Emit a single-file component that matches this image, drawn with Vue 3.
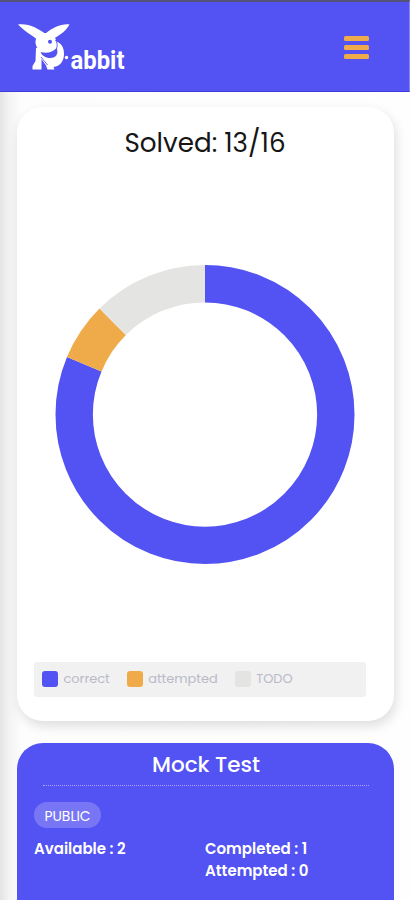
<script setup>
import { computed, ref } from 'vue'

const solved = ref(13)
const total = ref(16)

const segments = [
  { label: 'correct',   value: 13, color: '#5352f3' },
  { label: 'attempted', value: 1,  color: '#efab4a' },
  { label: 'TODO',      value: 2,  color: '#e4e4e2' },
]

const radius = 131.25
const round = 2 * Math.PI * radius

const arcs = computed(() => {
  let start = 0
  return segments.map((s) => {
    const length = (s.value / total.value) * round
    const arc = { color: s.color, dash: `${length} ${round - length}`, offset: -start }
    start += length
    return arc
  })
})
</script>

<template>
  <div class="page">

    <!-- Header -->
    <header class="header">
      <svg class="logo" viewBox="0 0 120 56" fill="#fff">
        <!-- body and legs -->
        <path d="M19 26L18.5 39L15.5 44V47.5H24.5V37L29 43.5L30.5 47.5H37.5L36.5 45C43 44.5 47 39 47 32C47 25 44 20.5 38 19L26 24Z"/>
        <!-- ears -->
        <path d="M1 2.5C11 1 21 6 30 13L21 18C16 14 7 9 1 2.5Z"/>
        <path d="M52.5 2.5C45 1.5 36 5 28 12L36 17C43 13 49 9 52.5 2.5Z"/>
        <!-- head -->
        <path d="M28 11C34 11 39 14 39 19.5C39 26 34 29.5 28.5 29.5C22 29.5 18.5 25 18.5 20C18.5 15 22 11 28 11Z"/>
        <circle cx="33" cy="19.8" r="2" fill="#5352f3"/>
        <path d="M23.5 30C30 32 36 30 39.5 26C42 31 39.5 36 33 36C28.5 36 25 33.5 23.5 30Z" fill="#5352f3"/>
        <path d="M38.5 18C40.5 20.5 40.5 24 39.5 27M24 35L30.5 43" fill="none" stroke="#5352f3" stroke-width="0.9"/>
        <circle cx="49.5" cy="35.5" r="1.7"/>
        <text x="53.5" y="47" textLength="54" lengthAdjust="spacingAndGlyphs">abbit</text>
      </svg>
      <button class="menu-btn" aria-label="Menu">
        <span></span><span></span><span></span>
      </button>
    </header>

    <!-- Progress chart -->
    <main class="content">
      <section class="card chart-card">
        <h2 class="solved">Solved: {{ solved }}/{{ total }}</h2>
        <svg class="donut" viewBox="0 0 300 300">
          <g transform="rotate(-90 150 150)">
            <circle v-for="arc in arcs" :key="arc.color" cx="150" cy="150" :r="radius"
                    fill="none" stroke-width="37.5" :stroke="arc.color"
                    :stroke-dasharray="arc.dash" :stroke-dashoffset="arc.offset"/>
          </g>
        </svg>
        <div class="legend">
          <div v-for="s in segments" :key="s.label" class="legend-item">
            <span class="swatch" :style="{ backgroundColor: s.color }"></span>
            <span class="legend-label">{{ s.label }}</span>
          </div>
        </div>
      </section>

      <!-- Mock test -->
      <section class="card test-card">
        <h3 class="test-title">Mock Test</h3>
        <span class="tag">PUBLIC</span>
        <div class="stats">
          <div class="available">Available : 2</div>
          <div>
            <div class="completed">Completed : 1</div>
            <div class="attempted">Attempted : 0</div>
          </div>
        </div>
      </section>
    </main>
  </div>
</template>

<style>
body {
  margin: 0;
  overflow: hidden;
}
</style>

<style scoped>
.page {
  box-sizing: border-box;
  width: 410px;
  height: 900px;
  overflow: hidden;
  background: linear-gradient(to right, #e4e4e4 0, #f3f3f3 9px, #fdfdfd 22px, #fefefe 100%);
  font-family: Poppins, Inter, "Open Sans", sans-serif;
}

/* ── Header ── */
.header {
  box-sizing: border-box;
  display: flex;
  align-items: center;
  justify-content: space-between;
  height: 92px;
  padding: 2px 40px 0 17px;
  border-top: 2px solid #555278;
  border-bottom: 1px solid #403edb;
  border-right: 1px solid #8886f5;
  background-color: #5352f3;
}

.logo {
  width: 120px;
  height: 56px;
  margin-top: 4px;
}

.logo text {
  font: 700 25.5px Roboto, "Open Sans", sans-serif;
}

.menu-btn {
  display: flex;
  flex-direction: column;
  gap: 4px;
  width: 25px;
  padding: 0;
  border: none;
  background: none;
}

.menu-btn span {
  height: 5px;
  border-radius: 1.5px;
  background-color: #efab4a;
}

/* ── Cards ── */
.content {
  display: flex;
  flex-direction: column;
  gap: 22px;
  padding: 15px 16px 0 17px;
}

.card {
  box-sizing: border-box;
  border-radius: 26px;
}

.chart-card {
  display: flex;
  flex-direction: column;
  align-items: center;
  height: 614px;
  padding: 18px 18px 0 17px;
  background-color: #fff;
  box-shadow: 2px 5px 12px rgba(0, 0, 0, 0.13);
}

.solved {
  margin: 0;
  font-size: 26.2px;
  font-weight: 400;
  line-height: 36px;
  color: #161616;
  white-space: nowrap;
}

.donut {
  width: 300px;
  height: 299px;
  margin-top: 104px;
  flex-shrink: 0;
}

/* ── Legend ── */
.legend {
  box-sizing: border-box;
  display: flex;
  align-items: center;
  align-self: flex-start;
  gap: 17px;
  width: 332px;
  height: 35px;
  margin-top: 98px;
  padding: 0 8px 2px;
  border-radius: 3px;
  background-color: #f1f1f1;
}

.legend-item {
  display: flex;
  align-items: center;
  gap: 5.5px;
}

.swatch {
  width: 16px;
  height: 16px;
  border-radius: 3px;
}

.legend-label {
  font-size: 12.9px;
  line-height: 18px;
  color: #b9bac9;
}

/* ── Mock test card ── */
.test-card {
  height: 190px;
  padding: 5px 25px 0 17px;
  background-color: #5352f3;
  color: #fff;
}

.test-title {
  margin: 0 0 16px 9px;
  border-bottom: 1px dotted #a9a8fa;
  font-size: 21.5px;
  font-weight: 500;
  line-height: 33px;
  height: 37px;
  text-align: center;
}

.tag {
  display: block;
  box-sizing: border-box;
  width: 67px;
  height: 26px;
  border-radius: 13px;
  background-color: #7876f4;
  font-size: 13.9px;
  line-height: 28px;
  text-align: center;
}

.stats {
  display: grid;
  grid-template-columns: 171px 1fr;
  margin-top: 10px;
  font-size: 15px;
  font-weight: 600;
  line-height: 22px;
  white-space: nowrap;
}
</style>
